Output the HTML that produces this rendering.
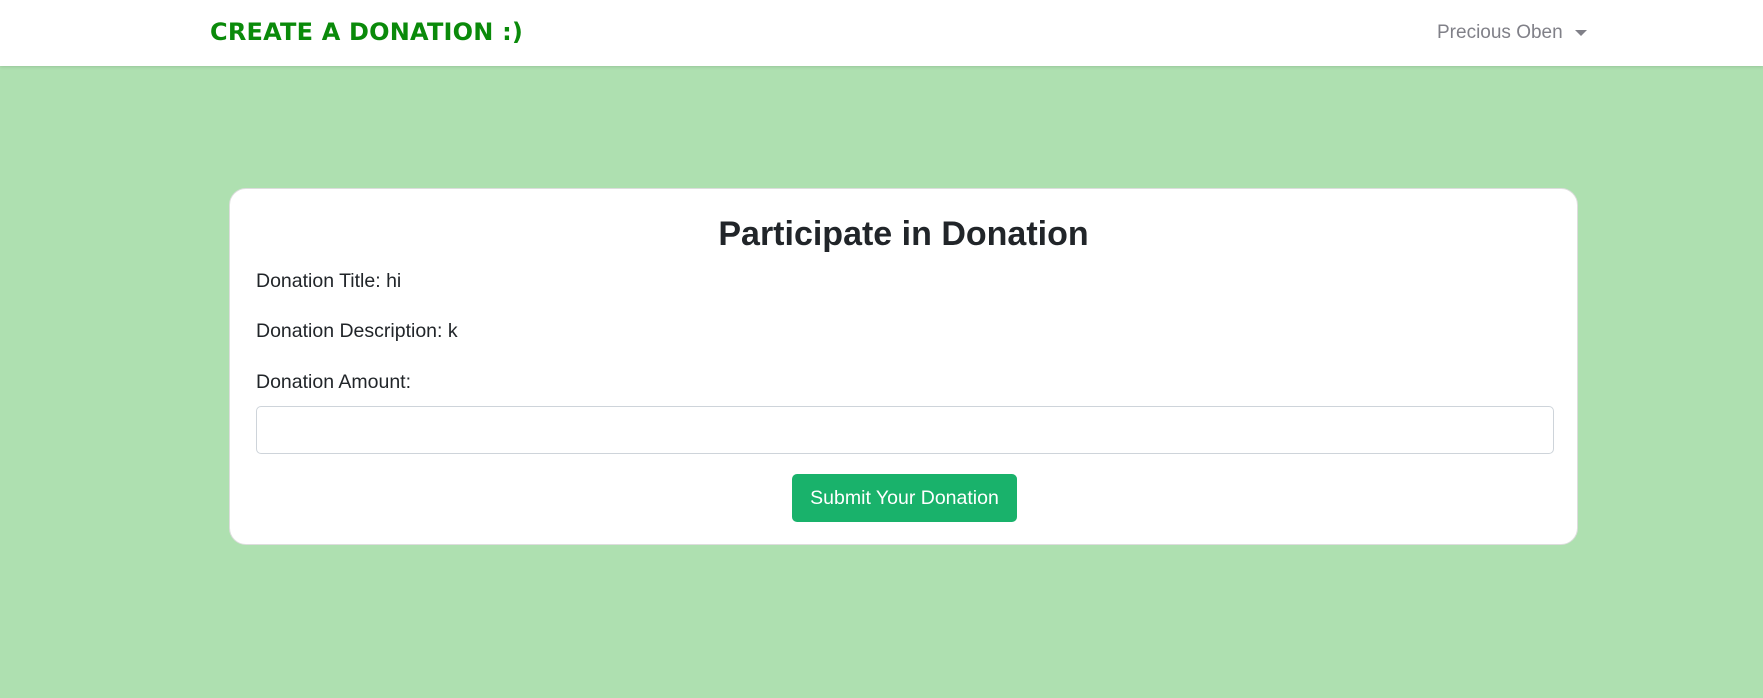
<!DOCTYPE html>
<html><head><style>
body{margin:0;width:1763px;height:698px;background:#aee0b0;font-family:"Liberation Sans",sans-serif;overflow:hidden;position:relative}
.nav{position:absolute;left:0;top:0;width:1763px;height:66px;background:#fff;box-shadow:0 1px 3px rgba(0,0,0,.12)}
.brand{position:absolute;left:210px;top:18px;font-family:"Comic Sans MS","DejaVu Sans",sans-serif;font-weight:bold;font-size:24px;color:#0a8a0a;letter-spacing:0.2px}
.user{position:absolute;left:1437px;top:22px;font-size:19px;color:#808088}
.caret{display:inline-block;margin-left:12px;vertical-align:middle;border-left:6px solid transparent;border-right:6px solid transparent;border-top:6px solid #808088}
.card{position:absolute;left:229px;top:188px;width:1349px;height:357px;background:#fff;border:1px solid #ddd;border-radius:17px;box-sizing:border-box}
h2{position:absolute;left:0;width:100%;top:26px;margin:0;text-align:center;font-size:34px;font-weight:600;color:#212529}
.l{position:absolute;left:26px;font-size:19.5px;color:#212529}
.inp{position:absolute;left:26px;top:217px;width:1298px;height:48px;border:1px solid #ced4da;border-radius:5px;box-sizing:border-box}
.btn{position:absolute;left:562px;top:285px;width:225px;height:48px;background:#19b26b;border-radius:5px;color:#fff;font-size:19.5px;line-height:48px;text-align:center}
</style></head><body>
<div class="nav"><div class="brand">CREATE A DONATION :)</div><div class="user">Precious Oben<span class="caret"></span></div></div>
<div class="card">
<h2>Participate in Donation</h2>
<div class="l" style="top:81px">Donation Title: hi</div>
<div class="l" style="top:131px">Donation Description: k</div>
<div class="l" style="top:182px">Donation Amount:</div>
<div class="inp"></div>
<div class="btn">Submit Your Donation</div>
</div>
</body></html>
